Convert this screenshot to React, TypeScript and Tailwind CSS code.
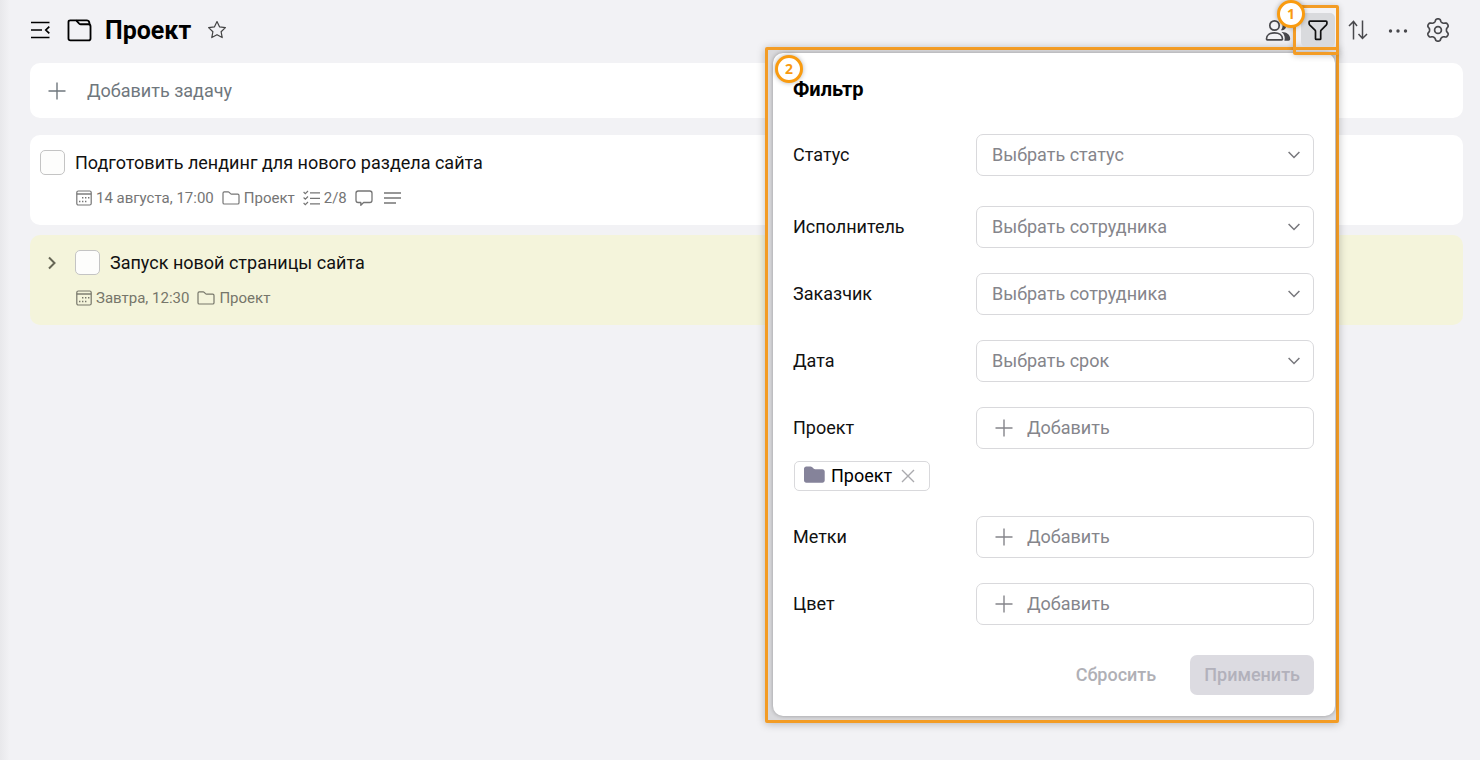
import React, { useState } from 'react';
import clsx from 'clsx';

interface IconProps {
  className?: string;
}

interface Task {
  id: number;
  title: string;
  date: string;
  project: string;
  progress?: string;
  hasComments?: boolean;
  hasDescription?: boolean;
  hasChildren?: boolean;
  highlighted?: boolean;
}

const tasks: Task[] = [
  {
    id: 1,
    title: 'Подготовить лендинг для нового раздела сайта',
    date: '14 августа, 17:00',
    project: 'Проект',
    progress: '2/8',
    hasComments: true,
    hasDescription: true,
  },
  {
    id: 2,
    title: 'Запуск новой страницы сайта',
    date: 'Завтра, 12:30',
    project: 'Проект',
    hasChildren: true,
    highlighted: true,
  },
];

// six rounded teeth around a 24x24 box
const gearPath =
  Array.from({ length: 120 }, (_, i) => {
    const angle = (i / 120) * Math.PI * 2;
    const radius = 9.8 + 1.4 * Math.tanh(1.8 * Math.cos(6 * angle));
    const x = 12 + radius * Math.sin(angle);
    const y = 12 - radius * Math.cos(angle);
    return `${i === 0 ? 'M' : 'L'}${x.toFixed(2)} ${y.toFixed(2)}`;
  }).join('') + 'z';

/* Icons */
const MenuIcon = () => (
  <svg width="20" height="18" viewBox="0 0 20 18" fill="none" stroke="currentColor" strokeWidth="1.7">
    <path d="M1 1.5h18.5M1 9h11M1 16.5h18.5" />
    <path d="M19.3 5.6L15.8 9l3.5 3.4" />
  </svg>
);

const FolderTabIcon = () => (
  <svg width="25" height="23" viewBox="0 0 26 24" fill="none" stroke="currentColor" strokeWidth="1.9" strokeLinejoin="round">
    <path d="M1.5 3.2c0-1.2.7-1.8 1.8-1.8h6.2l3.2 3.4c.5.5 1 .7 1.700.7h7.800c1.400 0 2.300.8 2.300 2.200v12.600c0 1.300-.7 2-2 2h-19c-1.300 0-2-.7-2-2z" />
    <path d="M9.800 1.400h10.700c1.500 0 2.400.8 2.700 2.200l.4 2.300" />
  </svg>
);

const StarIcon = () => (
  <svg width="20" height="20" viewBox="0 0 20 20" fill="none" stroke="currentColor" strokeWidth="1.2" strokeLinejoin="round">
    <path d="M10 1.500l2.500 5.300 5.900.8-4.300 4.100 1.100 5.900L10 14.700l-5.200 2.900 1.100-5.900L1.600 7.600l5.900-.8z" />
  </svg>
);

const PlusIcon = () => (
  <svg width="18" height="18" viewBox="0 0 18 18" fill="none" stroke="currentColor" strokeWidth="1.400">
    <path d="M9 .5v17M.5 9h17" />
  </svg>
);

const PeopleIcon = () => (
  <svg width="26" height="24" viewBox="0 0 26 24" fill="none">
    <circle cx="9.500" cy="7.500" r="4.700" stroke="currentColor" strokeWidth="1.700" />
    <path
      d="M1.500 21c0-4 3.400-6.200 8-6.200s8 2.200 8 6.200c0 .5-.3.800-.8.800H2.300c-.5 0-.8-.3-.8-.8z"
      stroke="currentColor"
      strokeWidth="1.700"
    />
    <path
      d="M15.500 2.500c3.500-.6 5.800 1.700 5.800 4.800 0 3.200-2.400 5.500-5.500 5 2.500-2.800 2.400-7.200-.3-9.800zM16.500 14c5-.2 8.700 2.600 8.700 6.800 0 1.200-.6 1.900-1.800 1.900h-4c.9-3.400.1-6.500-2.900-8.700z"
      fill="currentColor"
    />
  </svg>
);

const FunnelIcon = () => (
  <svg width="22" height="22" viewBox="0 0 22 22" fill="none" stroke="currentColor" strokeWidth="1.700" strokeLinejoin="round">
    <path d="M3 2.200h16c.6 0 .9.300.9.800v1.500c0 .5-.2.900-.5 1.300l-5.200 5.400c-.3.300-.5.700-.5 1.200v7.300c0 .5-.3.700-.7.700H9.200c-.4 0-.7-.2-.7-.7v-7.300c0-.5-.2-.9-.5-1.200L2.600 5.800c-.3-.4-.5-.8-.5-1.300V3c0-.5.300-.8.900-.8z" />
  </svg>
);

const SortIcon = () => (
  <svg width="20" height="20" viewBox="0 0 20 20" fill="none" stroke="currentColor" strokeWidth="1.500">
    <path d="M5.500 19.500V1.500M1 6l4.500-4.600L9 6M14.500.5v18M10.500 14l4 4.500 4.500-4.500" />
  </svg>
);

const DotsIcon = () => (
  <svg width="20" height="6" viewBox="0 0 20 6" fill="currentColor">
    <circle cx="2.500" cy="4" r="1.700" />
    <circle cx="10" cy="4" r="1.700" />
    <circle cx="17.500" cy="4" r="1.700" />
  </svg>
);

const GearIcon = () => (
  <svg width="24" height="24" viewBox="0 0 24 24" fill="none" stroke="currentColor" strokeWidth="1.700" strokeLinejoin="round">
    <path d={gearPath} />
    <circle cx="12" cy="12" r="3.400" />
  </svg>
);

const CalendarIcon = () => (
  <svg width="16" height="16" viewBox="0 0 16 16" fill="none" stroke="currentColor" strokeWidth="1.200">
    <rect x=".8" y="1" width="14.400" height="14" rx="1.500" />
    <path d="M.8 4h14.400" strokeWidth="1.400" />
    <path d="M6 7.700h1.400M9 7.700h1.400M12 7.700h1.400M3 11.500h1.400M6 11.500h1.400M9 11.500h1.400" strokeWidth="1.400" />
  </svg>
);

const FolderIcon = () => (
  <svg width="18" height="16" viewBox="0 0 18 16" fill="none" stroke="currentColor" strokeWidth="1.200" strokeLinejoin="round">
    <path d="M1 3.200c0-.8.500-1.300 1.300-1.300h3.900c.4 0 .7.100 1 .4l1.300 1.400c.3.300.6.400 1 .4h6.200c.8 0 1.300.5 1.300 1.300v7.300c0 .8-.5 1.300-1.300 1.300H2.300c-.8 0-1.300-.5-1.300-1.300z" />
  </svg>
);

const ChecklistIcon = () => (
  <svg width="17" height="16" viewBox="0 0 17 16" fill="none" stroke="currentColor" strokeWidth="1.200">
    <path d="M7 2.800h10M7 8.300h10M7 13.800h10M.6 2l1.700 1.600L5 1M.6 7.500l1.700 1.600L5 6.500M.6 13l1.700 1.600L5 12" />
  </svg>
);

const CommentIcon = () => (
  <svg width="18" height="16" viewBox="0 0 18 16" fill="none" stroke="currentColor" strokeWidth="1.300" strokeLinejoin="round">
    <path d="M3.200 1h11.600c1.300 0 2.200.9 2.200 2.200v7.100c0 1.300-.9 2.200-2.200 2.200H8.600L5.800 15.300v-2.800H3.200C1.900 12.500 1 11.600 1 10.300V3.200C1 1.900 1.900 1 3.200 1z" />
  </svg>
);

const LinesIcon = () => (
  <svg width="17" height="14" viewBox="0 0 17 14" fill="none" stroke="currentColor" strokeWidth="1.400">
    <path d="M0 2h17M0 7h17M0 12h12" />
  </svg>
);

const ChevronIcon = ({ className }: IconProps) => (
  <svg className={className} width="12" height="8" viewBox="0 0 12 8" fill="none" stroke="currentColor" strokeWidth="1.500">
    <path d="M.6 1L6 6.500 11.400 1" />
  </svg>
);

const Badge = ({ value, className }: { value: number; className: string }) => (
  <span
    className={clsx(
      'absolute z-30 flex size-7 items-center justify-center rounded-full border-3 border-[#f99b10] bg-white font-["Open_Sans",sans-serif] text-sm font-bold text-[#f99b10] shadow-[0_0_5px_rgba(0,0,0,0.3)]',
      className
    )}
  >
    {value}
  </span>
);

const TaskCard = ({ task }: { task: Task }) => (
  <li
    className={clsx(
      'rounded-[10px] px-[10px] pt-[15px] pb-4',
      task.highlighted ? 'bg-[#f4f4db]' : 'bg-white'
    )}
  >
    <div className="flex h-[25px] items-center">
      {task.hasChildren && (
        <button type="button" aria-label="Развернуть" className="flex w-[35px] pl-[7px] text-[#666655]">
          <svg width="10" height="14" viewBox="0 0 10 14" fill="none" stroke="currentColor" strokeWidth="2">
            <path d="M2 1.500L7.500 7 2 12.500" />
          </svg>
        </button>
      )}
      <label className="flex items-center gap-[10px] text-lg leading-6 text-[#111]">
        <input
          type="checkbox"
          className="size-[25px] appearance-none rounded-[5px] border border-[#c4c4c4] bg-[#fdfdfc]"
        />
        {task.title}
      </label>
    </div>

    <div
      className={clsx(
        'mt-3 flex h-[22px] items-center gap-2 pl-9 text-[15px] leading-5',
        task.highlighted ? 'text-[#76766a]' : 'text-[#757575]'
      )}
    >
      <span className="flex items-center gap-1">
        <CalendarIcon />
        {task.date}
      </span>
      <span className="flex items-center gap-1">
        <FolderIcon />
        {task.project}
      </span>
      {task.progress && (
        <span className="flex items-center gap-1">
          <ChecklistIcon />
          {task.progress}
        </span>
      )}
      {task.hasComments && <CommentIcon />}
      {task.hasDescription && (
        <span className="pl-[3px]">
          <LinesIcon />
        </span>
      )}
    </div>
  </li>
);

const SelectRow = ({ id, label, placeholder }: { id: string; label: string; placeholder: string }) => (
  <div className="flex items-center">
    <label htmlFor={id} className="w-[183px] shrink-0">
      {label}
    </label>
    <div className="relative flex-1">
      <select
        id={id}
        className="h-[42px] w-full appearance-none rounded-[7px] border border-[#d9d9dc] bg-white px-[15px] text-[#85858b]"
      >
        <option>{placeholder}</option>
      </select>
      <ChevronIcon className="pointer-events-none absolute top-[17px] right-[14px] text-[#77777c]" />
    </div>
  </div>
);

const AddRow = ({ id, label }: { id: string; label: string }) => (
  <div className="flex items-center">
    <label htmlFor={id} className="w-[183px] shrink-0">
      {label}
    </label>
    <button
      id={id}
      type="button"
      className="flex h-[42px] flex-1 items-center gap-[14px] rounded-[7px] border border-[#d9d9dc] bg-white px-[18px] text-[#85858b]"
    >
      <PlusIcon />
      Добавить
    </button>
  </div>
);

const FilterPanel = () => {
  const [projects, setProjects] = useState(['Проект']);

  return (
    <div className="absolute top-[47px] right-[141px] z-10 w-[574px] rounded-xs border-3 border-[#f39c25] bg-[#d9d9dc] pt-[3px] pr-px pb-1 pl-[5px] shadow-[0_1px_8px_rgba(0,0,0,0.25)]">
      <Badge value={2} className="top-[5px] left-[7px]" />
      <form className="rounded-[10px] bg-white pt-6 pr-[21px] pb-[21px] pl-5 text-lg leading-6 text-[#111] shadow-[0_0_4px_rgba(0,0,0,0.3)]">
        <h2 className="text-xl leading-6 font-bold text-black">Фильтр</h2>

        <div className="mt-[33px]">
          <SelectRow id="status" label="Статус" placeholder="Выбрать статус" />
        </div>
        <div className="mt-[30px] flex flex-col gap-[25px]">
          <SelectRow id="assignee" label="Исполнитель" placeholder="Выбрать сотрудника" />
          <SelectRow id="customer" label="Заказчик" placeholder="Выбрать сотрудника" />
          <SelectRow id="date" label="Дата" placeholder="Выбрать срок" />
          <div>
            <AddRow id="project" label="Проект" />
            <div className="mt-3 flex gap-2 pl-px">
              {projects.map((name) => (
                <span
                  key={name}
                  className="flex h-[30px] items-center rounded-[5px] border border-[#d9d9dc] px-[9px] text-black"
                >
                  <svg width="21" height="20" viewBox="0 0 22 20" fill="#85839a">
                    <path d="M0 2.500C0 1 1 0 2.500 0h4.200c.8 0 1.400.3 2 .8l1.300 1.300c.5.500 1 .7 1.700.7h7.500c1.500 0 2.500 1 2.500 2.500v9.200c0 1.500-1 2.500-2.500 2.500H2.500C1 17 0 16 0 14.500z" />
                  </svg>
                  <span className="pl-[6px]">{name}</span>
                  <button
                    type="button"
                    aria-label="Удалить"
                    onClick={() => setProjects(projects.filter((p) => p !== name))}
                    className="pr-[5px] pl-[9px] text-[#aaaaae]"
                  >
                    <svg width="14" height="14" viewBox="0 0 14 14" fill="none" stroke="currentColor" strokeWidth="1.400">
                      <path d="M1 1l12 12M13 1L1 13" />
                    </svg>
                  </button>
                </span>
              ))}
            </div>
          </div>
          <AddRow id="labels" label="Метки" />
          <AddRow id="color" label="Цвет" />
        </div>

        <div className="mt-[30px] flex justify-end gap-5 font-medium">
          <button type="reset" className="h-10 px-[14px] text-[#b0b0b6]">
            Сбросить
          </button>
          <button type="button" className="h-10 rounded-[7px] bg-[#dcdbe1] px-[14px] text-[#b2b1bb]">
            Применить
          </button>
        </div>
      </form>
    </div>
  );
};

const App: React.FC = () => {
  return (
    <div className="relative min-h-screen bg-[linear-gradient(to_right,#e8e8eb,#f2f2f5_10px)] pr-[17px] pl-[30px] font-[Roboto,sans-serif]">
      <header className="flex h-[63px] items-center justify-between pr-2 pb-[3px]">
        <div className="flex items-center">
          <button type="button" aria-label="Меню" className="text-black">
            <MenuIcon />
          </button>
          <span className="pl-[17px]">
            <FolderTabIcon />
          </span>
          <h1 className="pt-[2px] pl-[13px] text-[25px] leading-8 font-bold text-black">Проект</h1>
          <button type="button" aria-label="В избранное" className="pl-4 text-[#444]">
            <StarIcon />
          </button>
        </div>

        <div className="flex items-center gap-[6px] text-[#48484c]">
          <button type="button" aria-label="Участники" className="flex size-[34px] items-center justify-center">
            <PeopleIcon />
          </button>
          <div className="relative z-20">
            <button
              type="button"
              aria-label="Фильтр"
              className="flex size-[34px] items-center justify-center rounded-[5px] bg-[#d9dadd] text-[#111]"
            >
              <FunnelIcon />
            </button>
            <span className="pointer-events-none absolute -top-2 -right-1 -bottom-2 -left-2 rounded-xs border-3 border-[#f39c25] shadow-[0_1px_6px_rgba(0,0,0,0.2)]" />
            <Badge value={1} className="-top-[13px] -left-6" />
          </div>
          <button type="button" aria-label="Сортировка" className="flex size-[34px] items-center justify-center">
            <SortIcon />
          </button>
          <button type="button" aria-label="Ещё" className="flex size-[34px] items-center justify-center">
            <DotsIcon />
          </button>
          <button type="button" aria-label="Настройки" className="flex size-[34px] items-center justify-center">
            <GearIcon />
          </button>
        </div>
      </header>

      <main>
        <button
          type="button"
          className="flex h-[55px] w-full items-center gap-[21px] rounded-[10px] bg-white px-[18px] text-lg text-[#6f777d]"
        >
          <PlusIcon />
          Добавить задачу
        </button>
        <ul className="mt-[17px] flex flex-col gap-[10px]">
          {tasks.map((task) => (
            <TaskCard key={task.id} task={task} />
          ))}
        </ul>
      </main>

      <FilterPanel />
    </div>
  );
};

export default App;
